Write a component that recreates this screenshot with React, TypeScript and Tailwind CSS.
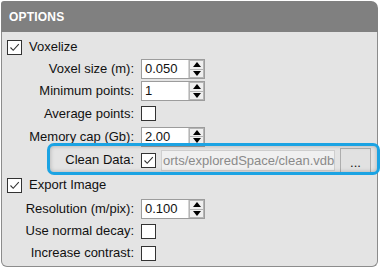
import React from 'react';

const Check: React.FC<{ checked?: boolean }> = ({ checked }) => (
  <div className="w-[15px] h-[15px] border border-[#333] bg-white flex items-center justify-center shrink-0">
    {checked && (
      <svg width="13" height="13" viewBox="0 0 13 13">
        <path d="M2.5 6.5 L5.2 9.3 L10.8 3.2" fill="none" stroke="#333" strokeWidth="1.1" />
      </svg>
    )}
  </div>
);

const Spin: React.FC<{ value: string }> = ({ value }) => (
  <div className="w-[64px] h-[20px] border border-[#9c9c9c] bg-white flex">
    <div className="flex-1 pl-[3px] leading-[18px] text-[13px] text-[#111]">{value}</div>
    <div className="w-[16px] flex flex-col border-l border-[#d4d4d4]">
      <div className="flex-1 flex items-center justify-center bg-[#efefef] border border-[#b5b5b5]">
        <svg width="8" height="5" viewBox="0 0 8 5"><polygon points="4,0 8,5 0,5" fill="#000" /></svg>
      </div>
      <div className="flex-1 flex items-center justify-center bg-[#efefef] border border-t-0 border-[#b5b5b5]">
        <svg width="8" height="5" viewBox="0 0 8 5"><polygon points="0,0 8,0 4,5" fill="#000" /></svg>
      </div>
    </div>
  </div>
);

const Row: React.FC<{ label: string; h: string; children: React.ReactNode }> = ({ label, h, children }) => (
  <div className={`flex items-center ${h}`}>
    <div className="w-[133px] text-right text-[13px] text-[#111] pr-[1px]">{label}</div>
    <div className="ml-[6px] flex items-center">{children}</div>
  </div>
);

const App: React.FC = () => {
  return (
    <div className="w-[380px] h-[269px] bg-white pl-px pt-px font-['Liberation_Sans',Arial,sans-serif]">
      <div className="w-[377px] h-[266px] flex flex-col">
        {/* header */}
        <div className="h-[31px] bg-[#808080] rounded-tl-[3px] rounded-tr-[7px] px-[8px] flex items-center">
          <span className="text-white font-bold text-[12px] tracking-[0.2px]">OPTIONS</span>
        </div>

        {/* body */}
        <div className="flex-1 bg-[#e4e4e4] border-x border-b border-[#8c8c8c] rounded-b-[6px] pt-[4px]">
          <div className="flex items-center h-[22px] pl-[5px]">
            <Check checked />
            <span className="ml-[7px] text-[13px] text-[#111]">Voxelize</span>
          </div>
          <Row label="Voxel size (m):" h="h-[22px]"><Spin value="0.050" /></Row>
          <Row label="Minimum points:" h="h-[22px]"><Spin value="1" /></Row>
          <Row label="Average points:" h="h-[23px]"><Check /></Row>
          <Row label="Memory cap (Gb):" h="h-[23px]"><Spin value="2.00" /></Row>

          {/* clean data, highlighted */}
          <div className="relative flex items-center h-[24px]">
            <div className="absolute left-[45px] right-[-3px] top-[-5px] bottom-[-3px] border-[3px] border-[#1ba3e3] rounded-[7px] shadow-[inset_0_0_4px_rgba(0,0,0,0.25)]" />
            <div className="w-[133px] text-right text-[13px] text-[#111] pr-[1px]">Clean Data:</div>
            <div className="ml-[6px] flex items-center">
              <Check checked />
              <div className="ml-[5px] w-[174px] h-[21px] bg-[#f0f0f0] border border-[#cfcfcf] flex items-center pl-[1px]">
                <span className="whitespace-nowrap text-[13px] leading-[19px] text-[#8a8a8a]">orts/exploredSpace/clean.vdb</span>
              </div>
              <div className="ml-[5px] w-[31px] h-[25px] bg-[#e1e1e1] border border-[#adadad] flex items-end justify-center pb-[4px]">
                <span className="text-[13px] leading-[10px] text-[#111]">...</span>
              </div>
            </div>
          </div>

          <div className="flex items-center h-[26px] pl-[5px]">
            <Check checked />
            <span className="ml-[7px] text-[13px] text-[#111]">Export Image</span>
          </div>
          <Row label="Resolution (m/pix):" h="h-[22px]"><Spin value="0.100" /></Row>
          <Row label="Use normal decay:" h="h-[22px]"><Check /></Row>
          <Row label="Increase contrast:" h="h-[22px]"><Check /></Row>
        </div>
      </div>
    </div>
  );
};

export default App;
